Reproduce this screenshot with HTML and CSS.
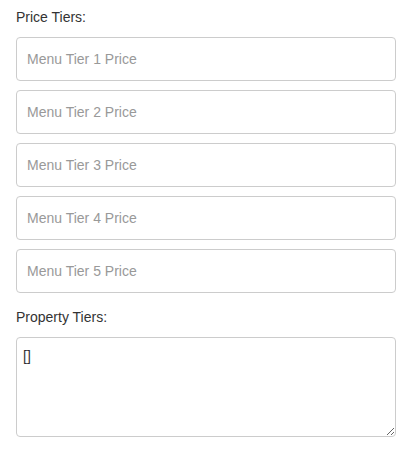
FILE: index.html
```html
<!DOCTYPE html>
<html lang="en">
<head>
  <meta charset="UTF-8">
  <meta name="viewport" content="width=device-width, initial-scale=1.0">
  <title>Tiers</title>
  <link rel="stylesheet" href="styles.css">
</head>
<body>
  <div class="form">
    <label class="field-label" for="tier1">Price Tiers:</label>
    <div class="tier-list">
      <input type="text" id="tier1" class="form-input" placeholder="Menu Tier 1 Price">
      <input type="text" id="tier2" class="form-input" placeholder="Menu Tier 2 Price">
      <input type="text" id="tier3" class="form-input" placeholder="Menu Tier 3 Price">
      <input type="text" id="tier4" class="form-input" placeholder="Menu Tier 4 Price">
      <input type="text" id="tier5" class="form-input" placeholder="Menu Tier 5 Price">
    </div>

    <label class="field-label" for="propertyTiers">Property Tiers:</label>
    <textarea id="propertyTiers" class="form-textarea">[]</textarea>
  </div>
</body>
</html>
```

FILE: styles.css
```css
body {
  margin: 0;
  font-family: "Liberation Sans", Arial, sans-serif;
  font-size: 14px;
  color: #333;
  background-color: #fff;
}

.form {
  display: flex;
  flex-direction: column;
  padding: 7px 23px 0 16px;
}

.field-label {
  display: block;
  line-height: 20px;
  margin-bottom: 10px;
}

.tier-list {
  display: flex;
  flex-direction: column;
  gap: 9px;
  margin-bottom: 14px;
}

.form-input,
.form-textarea {
  box-sizing: border-box;
  width: 100%;
  border: 1px solid #ccc;
  border-radius: 4px;
  font-family: "Liberation Sans", Arial, sans-serif;
  font-size: 14px;
  color: #333;
  background-color: #fff;
  margin: 0;
}

.form-input {
  height: 44px;
  padding: 0 10px;
}

.form-input::placeholder {
  color: #999;
}

.form-textarea {
  height: 100px;
  padding: 8px 6px;
  line-height: 20px;
  resize: vertical;
}
```
